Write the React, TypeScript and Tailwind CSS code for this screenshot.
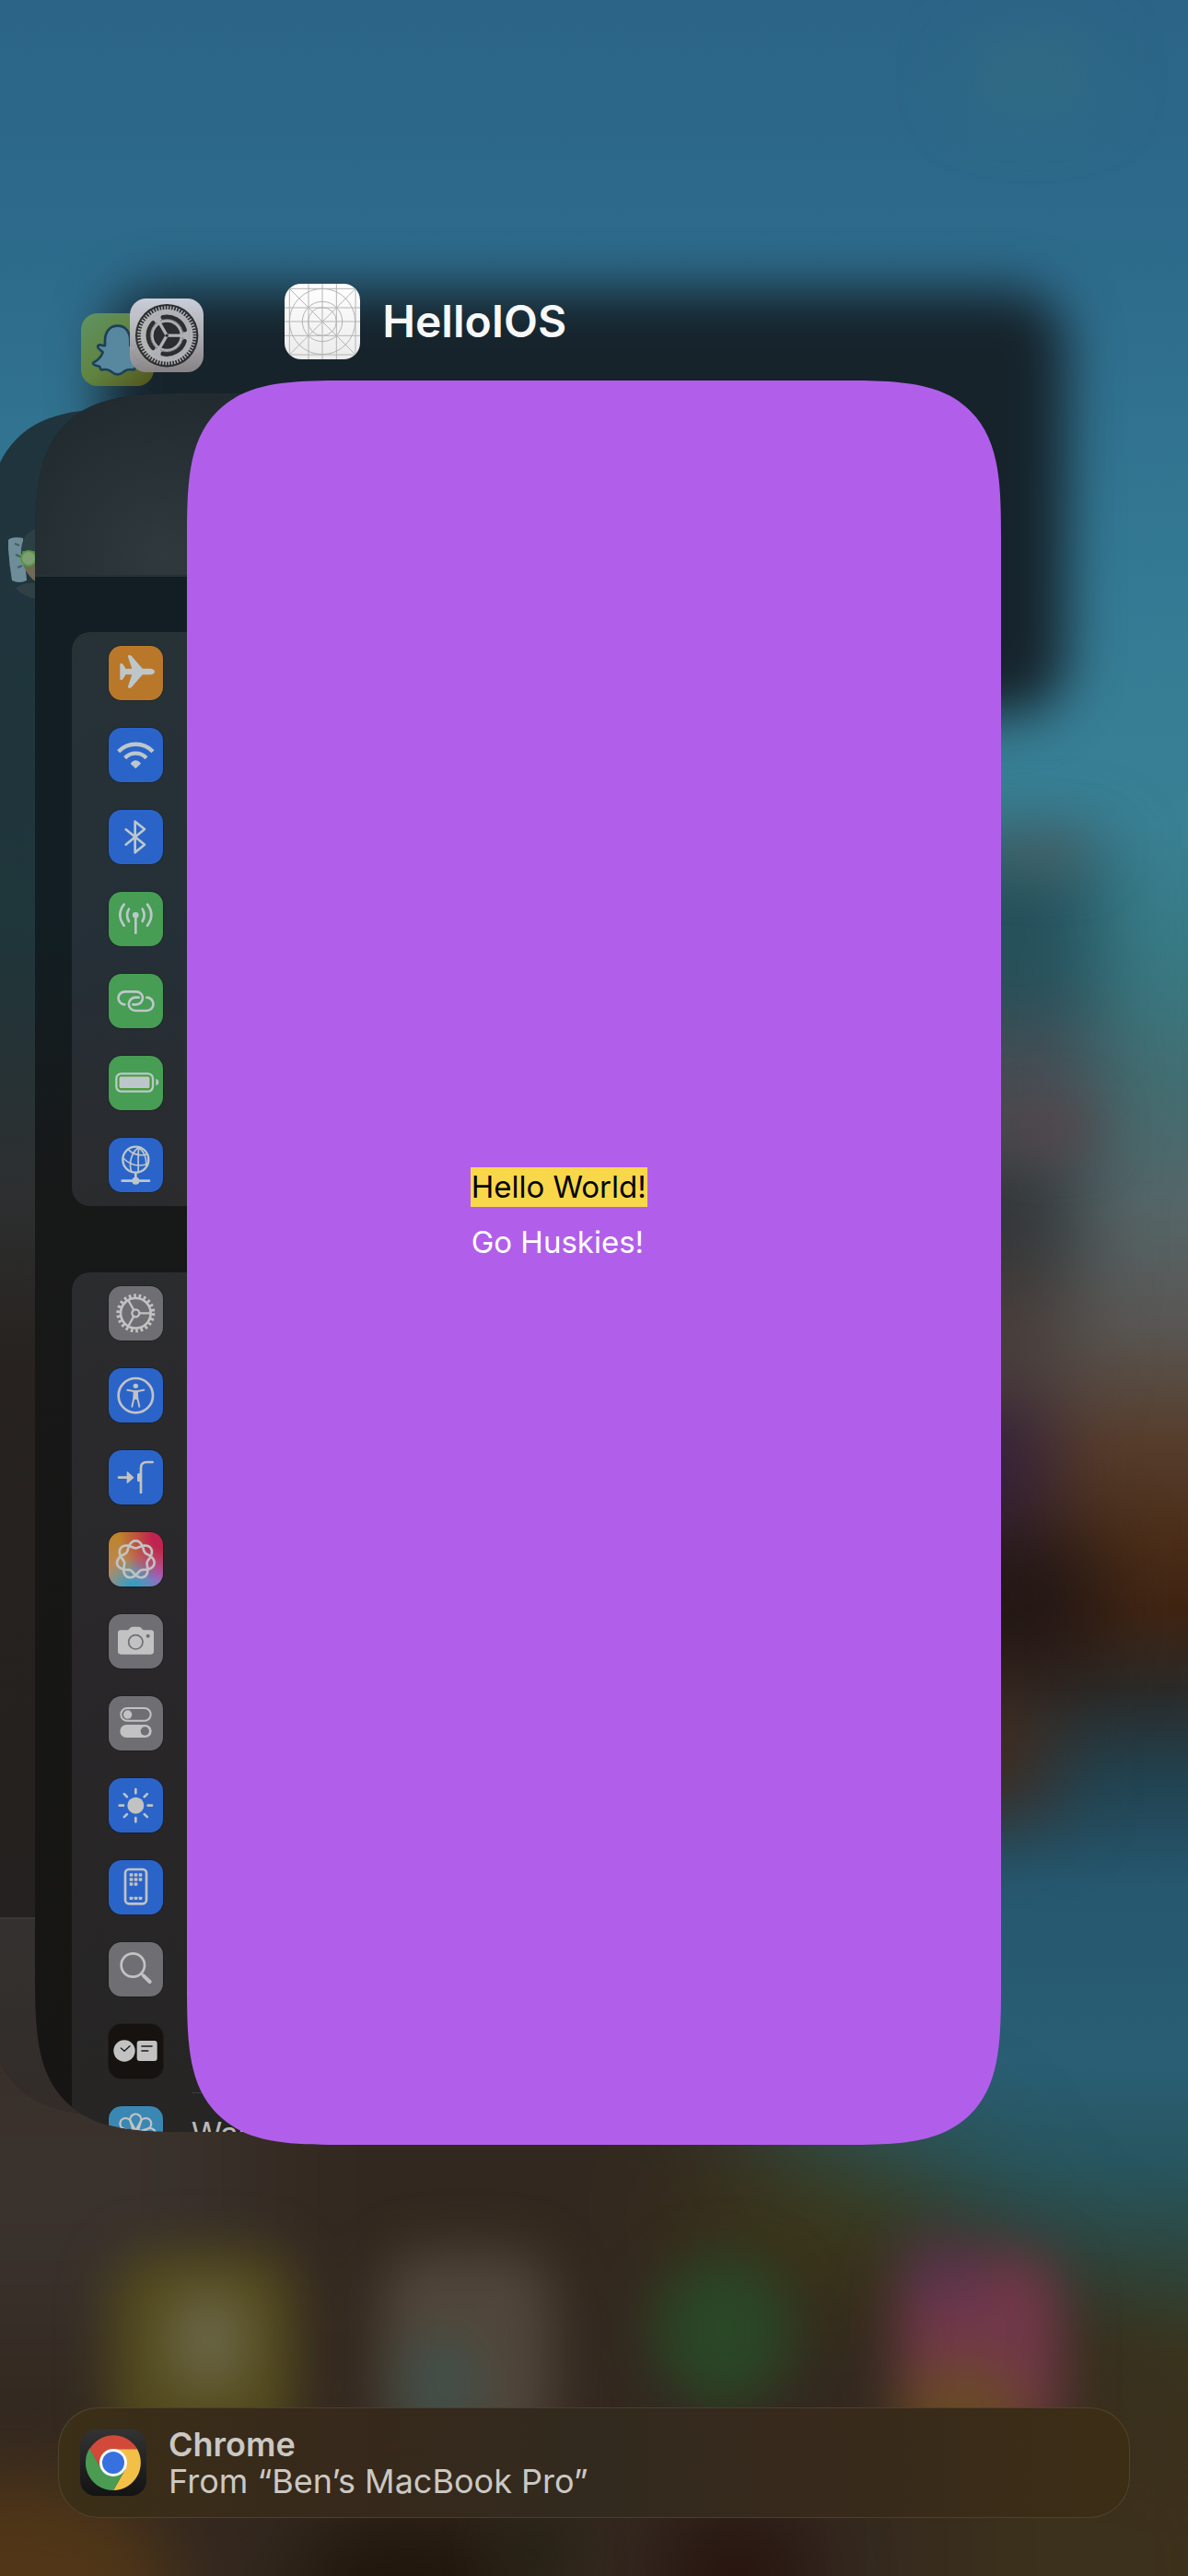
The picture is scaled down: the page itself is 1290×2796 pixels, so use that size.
import type { ReactNode } from "react";

const INK = "currentColor";

/* ---------- Wallpaper ---------- */

function Wallpaper() {
  return (
    <svg
      className="absolute inset-0 h-full w-full"
      viewBox="0 0 1290 2796"
      preserveAspectRatio="none"
      aria-hidden="true"
    >
      <defs>
        <linearGradient id="sky" x1="0" y1="0" x2="0" y2="1">
          <stop offset="0" stopColor="#2b6487" />
          <stop offset="0.09" stopColor="#2d6a8b" />
          <stop offset="0.23" stopColor="#347a94" />
          <stop offset="0.32" stopColor="#3a8094" />
          <stop offset="0.365" stopColor="#387b86" />
          <stop offset="0.42" stopColor="#426e72" />
          <stop offset="0.47" stopColor="#566567" />
          <stop offset="0.515" stopColor="#595653" />
          <stop offset="0.56" stopColor="#563d2c" />
          <stop offset="0.6" stopColor="#4a2d18" />
          <stop offset="0.625" stopColor="#402413" />
          <stop offset="0.655" stopColor="#2b2a28" />
          <stop offset="0.69" stopColor="#22424f" />
          <stop offset="0.733" stopColor="#265870" />
          <stop offset="0.8" stopColor="#295e74" />
          <stop offset="0.84" stopColor="#28565f" />
          <stop offset="0.88" stopColor="#2f463c" />
          <stop offset="0.915" stopColor="#3a381f" />
          <stop offset="1" stopColor="#3c2f1c" />
        </linearGradient>
        <filter id="near" filterUnits="userSpaceOnUse" x="-400" y="-400" width="2100" height="3600" colorInterpolationFilters="sRGB">
          <feGaussianBlur stdDeviation="28" />
        </filter>
        <filter id="mid" filterUnits="userSpaceOnUse" x="-400" y="-400" width="2100" height="3600" colorInterpolationFilters="sRGB">
          <feGaussianBlur stdDeviation="42" />
        </filter>
        <filter id="far" filterUnits="userSpaceOnUse" x="-400" y="-400" width="2100" height="3600" colorInterpolationFilters="sRGB">
          <feGaussianBlur stdDeviation="75" />
        </filter>
      </defs>
      <rect width="1290" height="2796" fill="url(#sky)" />

      <g filter="url(#far)">
        <path d="M-200 1500L500 1500L860 2340L980 2420L1350 2620L1490 3096L-200 3096Z" fill="#33281f" />
        <rect x="-150" y="2200" width="420" height="330" fill="#3a322d" />
        <ellipse cx="890" cy="2410" rx="150" ry="70" fill="#3f3a15" />
        <rect x="1010" y="2610" width="400" height="300" fill="#3c311c" />
      </g>

      <g filter="url(#mid)">
        <ellipse cx="1120" cy="80" rx="60" ry="24" fill="#37747a" />
        <rect x="900" y="920" width="290" height="190" fill="#26505a" />
        <rect x="900" y="1110" width="290" height="150" fill="#484c52" />
        <rect x="900" y="1260" width="270" height="120" fill="#323639" />
        <rect x="900" y="1380" width="260" height="120" fill="#473d39" />
        <rect x="900" y="1520" width="240" height="140" fill="#33203a" />
        <rect x="900" y="1670" width="290" height="140" fill="#221715" />
        <rect x="900" y="1830" width="240" height="140" fill="#402b1f" />
        <ellipse cx="20" cy="2820" rx="170" ry="130" fill="#523717" />
        <ellipse cx="440" cy="2810" rx="120" ry="80" fill="#21160b" />
        <ellipse cx="800" cy="2800" rx="80" ry="80" fill="#281410" />
      </g>

      <g filter="url(#near)">
        <ellipse cx="1130" cy="925" rx="60" ry="16" fill="#515d5e" />
        <ellipse cx="1140" cy="1225" rx="50" ry="24" fill="#574549" />
        <ellipse cx="580" cy="2770" rx="40" ry="30" fill="#222211" />
        <rect x="122" y="2444" width="198" height="220" rx="50" fill="#544c1d" />
        <ellipse cx="226" cy="2540" rx="44" ry="54" fill="#6b6648" />
        <rect x="414" y="2444" width="186" height="220" rx="50" fill="#51463a" />
        <ellipse cx="478" cy="2590" rx="44" ry="60" fill="#41504a" />
        <ellipse cx="786" cy="2530" rx="76" ry="82" fill="#2a4726" />
        <rect x="976" y="2444" width="176" height="210" rx="50" fill="#723849" />
        <ellipse cx="1024" cy="2466" rx="50" ry="36" fill="#5a344d" />
        <ellipse cx="1044" cy="2620" rx="70" ry="54" fill="#694a26" />
      </g>

      <rect x="114" y="314" width="1044" height="462" rx="60" fill="#16232b" filter="url(#near)" />
    </svg>
  );
}

/* ---------- App icons ---------- */

function SnapIcon() {
  return (
    <svg className="size-[79px]" viewBox="0 0 237 237" role="img" aria-label="Snapchat">
      <defs>
        <linearGradient id="snap" x1="0" y1="0" x2="1" y2="1">
          <stop offset="0" stopColor="#5e9464" />
          <stop offset="0.5" stopColor="#618340" />
          <stop offset="1" stopColor="#50521b" />
        </linearGradient>
      </defs>
      <rect width="237" height="237" rx="54" fill="url(#snap)" />
      <path
        d="M119 41C92 41 78 62 78 90V105C71 108 61 98 55 106C51 114 65 120 71 127C66 143 53 154 39 162C41 172 57 171 61 174C63 180 62 184 67 184C82 181 92 184 100 191C111 202 127 202 138 191C146 184 156 181 171 184C176 184 175 180 177 174C181 171 197 172 199 162C185 154 172 143 167 127C173 120 187 114 183 106C177 98 167 108 160 105V90C160 62 146 41 119 41Z"
        fill="#5888a0"
        stroke="#1b4156"
        strokeWidth="8"
        strokeLinejoin="round"
      />
    </svg>
  );
}

function SettingsAppIcon() {
  return (
    <svg className="size-20 opacity-95" viewBox="0 0 243 243" role="img" aria-label="Settings">
      <defs>
        <linearGradient id="steel" x1="0" y1="0" x2="0" y2="1">
          <stop offset="0" stopColor="#d3d6e0" />
          <stop offset="0.5" stopColor="#b5b4b9" />
          <stop offset="1" stopColor="#8d888b" />
        </linearGradient>
      </defs>
      <rect width="243" height="243" rx="54" fill="url(#steel)" />
      <circle cx="122" cy="122" r="104" fill="#2d2e31" />
      <circle cx="122" cy="122" r="91" fill="none" stroke="#b9b9be" strokeWidth="13" strokeDasharray="4.53 5" />
      <circle cx="122" cy="122" r="80" fill="none" stroke="#b9b9be" strokeWidth="13" />
      <circle cx="122" cy="122" r="55" fill="none" stroke="#b9b9be" strokeWidth="40" />
      <g fill="none" stroke="#2d2e31" strokeWidth="15" strokeLinecap="round">
        {[0, 120, 240].map((a) => (
          <path key={a} d="M180 141A61 61 0 0 1 109 182" transform={`rotate(${a} 122 122)`} />
        ))}
      </g>
      <circle cx="122" cy="122" r="53" fill="none" stroke="#77777b" strokeWidth="5" strokeDasharray="2.4 2.5" />
      <circle cx="122" cy="122" r="44" fill="#2d2e31" />
      <g stroke="#b9b9be" strokeWidth="10">
        {[0, 120, 240].map((a) => (
          <path key={a} d="M122 122H192" transform={`rotate(${a} 122 122)`} />
        ))}
      </g>
      <circle cx="122" cy="122" r="5" fill="#2d2e31" />
    </svg>
  );
}

function PlaceholderIcon() {
  const lines = [16, 78, 123, 169, 231];
  return (
    <svg className="size-[82px]" viewBox="0 0 246 246" role="img" aria-label="HelloIOS icon">
      <defs>
        <linearGradient id="paper" x1="0" y1="0" x2="0" y2="1">
          <stop offset="0" stopColor="#ffffff" />
          <stop offset="1" stopColor="#ececec" />
        </linearGradient>
        <clipPath id="tile">
          <rect width="246" height="246" rx="54" />
        </clipPath>
      </defs>
      <g clipPath="url(#tile)" fill="none" stroke="#b4b4b4" strokeWidth="3">
        <rect width="246" height="246" fill="url(#paper)" stroke="none" />
        {lines.map((p) => (
          <path key={p} d={`M${p} 0V246M0 ${p}H246`} />
        ))}
        <path d="M16 16L231 231M231 16L16 231" />
        <circle cx="123" cy="123" r="107" />
        <circle cx="123" cy="123" r="65" />
        <circle cx="123" cy="123" r="46" />
      </g>
    </svg>
  );
}

function ChromeIcon() {
  return (
    <svg className="size-[72px] shrink-0" viewBox="0 0 216 216" role="img" aria-label="Chrome icon">
      <defs>
        <linearGradient id="night" x1="0" y1="0" x2="0" y2="1">
          <stop offset="0" stopColor="#333333" />
          <stop offset="1" stopColor="#131313" />
        </linearGradient>
      </defs>
      <rect width="216" height="216" rx="50" fill="url(#night)" />
      <path d="M108 64H186A90 90 0 0 1 108 198L147 130Z" fill="#f3c047" />
      <path d="M31 61L70 130L108 152L147 130L108 198A90 90 0 0 1 31 61Z" fill="#4b9b53" />
      <path d="M31 63A90 90 0 0 1 186 63H108L70 130Z" fill="#d2493a" />
      <circle cx="108" cy="108" r="45" fill="#fafafa" />
      <circle cx="108" cy="108" r="36" fill="#3771e0" />
    </svg>
  );
}

/* ---------- Settings rows ---------- */

function knotPath() {
  const steps = 168;
  const points: string[] = [];
  for (let i = 0; i < steps; i++) {
    const t = (i / steps) * Math.PI * 4;
    const r = 50 + 12 * Math.cos(3.5 * t);
    points.push(`${(88 + r * Math.sin(t)).toFixed(1)} ${(90 - r * Math.cos(t)).toFixed(1)}`);
  }
  return `M${points.join("L")}Z`;
}

const line = { fill: "none", stroke: INK, strokeLinecap: "round", strokeLinejoin: "round" } as const;

type Row = { label: string; tile: string; art: ReactNode };

const BLUE = "bg-[#2a64c9]";
const GREEN = "bg-[#469d53]";
const GREY = "bg-[#6f6e73]";

const connectivity: Row[] = [
  {
    label: "Airplane Mode",
    tile: "bg-[#b97829]",
    art: (
      <path
        fill={INK}
        d="M150 84C150 90 142 94 134 94H110L75 134Q73 137 69 137H65Q62 137 63 133L76 94L56 93L46 109Q44 111 41 111Q37 111 37 107V61Q37 57 41 57Q44 57 46 59L56 75L76 74L63 35Q62 31 65 31H69Q73 31 75 34L110 74H134C142 74 150 78 150 84Z"
      />
    ),
  },
  {
    label: "Wi-Fi",
    tile: BLUE,
    art: (
      <>
        <path {...line} strokeLinecap="butt" strokeWidth="13" d="M32 77A78 78 0 0 1 144 77M53 98A48 48 0 0 1 123 98" />
        <path fill={INK} stroke={INK} strokeWidth="3" strokeLinejoin="round" d="M88 131L72 116Q88 98 104 116Z" />
      </>
    ),
  },
  {
    label: "Bluetooth",
    tile: BLUE,
    art: <path {...line} strokeWidth="8" d="M56 64L117 113L86 139V38L117 63L56 113" />,
  },
  {
    label: "Cellular",
    tile: GREEN,
    art: (
      <>
        <circle cx="88" cy="76" r="10" fill={INK} />
        <path {...line} strokeWidth="8" d="M88 80V134M66 56Q54 76 66 96M110 56Q122 76 110 96M50 41Q24 75 50 110M126 41Q152 75 126 110" />
      </>
    ),
  },
  {
    label: "Personal Hotspot",
    tile: GREEN,
    art: (
      <path
        {...line}
        strokeWidth="8"
        d="M52 100A21 21 0 0 1 53 58H90A21 21 0 0 1 90 100H79M98 77H87A21 21 0 0 0 87 120H124A21 21 0 0 0 124 77"
      />
    ),
  },
  {
    label: "Battery",
    tile: GREEN,
    art: (
      <>
        <rect x="25" y="58" width="119" height="58" rx="16" {...line} strokeWidth="7" />
        <rect x="33" y="66" width="102" height="41" rx="7" fill={INK} stroke="#3f9b1f" strokeWidth="3" />
        <path d="M154 75Q163 78 163 86Q163 94 154 97Z" fill={INK} />
      </>
    ),
  },
  {
    label: "VPN",
    tile: BLUE,
    art: (
      <>
        <circle cx="88" cy="71" r="42" {...line} strokeWidth="7" />
        <path {...line} strokeWidth="5" d="M100 30C76 44 64 80 74 110M98 32C94 60 98 90 96 112M98 32Q126 54 122 94M66 40Q88 62 126 54M47 66Q84 102 128 84" />
        <path {...line} strokeWidth="8" d="M88 114V138M44 140H132" />
        <circle cx="88" cy="140" r="12" fill={INK} />
      </>
    ),
  },
];

const general: Row[] = [
  {
    label: "General",
    tile: GREY,
    art: (
      <>
        <circle cx="88" cy="88" r="49" {...line} strokeWidth="8" />
        <circle cx="88" cy="88" r="57" {...line} strokeLinecap="butt" strokeWidth="12" strokeDasharray="8 8.28" />
        <circle cx="88" cy="88" r="12" {...line} strokeWidth="7" />
        <path {...line} strokeWidth="7" d="M100 88H137M82 78L64 46M82 98L64 130" />
      </>
    ),
  },
  {
    label: "Accessibility",
    tile: BLUE,
    art: (
      <>
        <circle cx="88" cy="89" r="56" {...line} strokeWidth="8" />
        <circle cx="88" cy="58" r="8" fill={INK} />
        <path {...line} strokeWidth="6" d="M61 71L82 75H94L115 71M84 78L82 98L76 125M92 78L94 98L100 125" />
        <path fill={INK} d="M80 74H96V102H80Z" />
      </>
    ),
  },
  {
    label: "Action Button",
    tile: BLUE,
    art: (
      <>
        <path {...line} strokeWidth="8" d="M33 89H60M105 138V58Q105 39 124 39H143" />
        <path fill={INK} stroke={INK} strokeWidth="4" strokeLinejoin="round" d="M61 72L80 89L61 106Z" />
        <rect x="93" y="75" width="12" height="28" rx="5" fill={INK} />
      </>
    ),
  },
  {
    label: "Apple Intelligence & Siri",
    tile: "bg-[radial-gradient(circle_at_100%_10%,#c02351_15%,transparent_60%),radial-gradient(circle_at_45%_105%,#2d9fc6_5%,transparent_50%),radial-gradient(circle_at_100%_90%,#a765be_15%,transparent_55%),linear-gradient(180deg,#bd8426,#b98a72)]",
    art: <path {...line} strokeWidth="8" d={knotPath()} />,
  },
  {
    label: "Camera",
    tile: GREY,
    art: (
      <>
        <path
          fill={INK}
          d="M40 52H62Q67 51 69 46Q72 41 78 41H98Q104 41 107 46Q109 51 114 52H137Q147 52 147 62V121Q147 131 137 131H40Q30 131 30 121V62Q30 52 40 52Z"
        />
        <circle cx="88" cy="91" r="23" fill="none" stroke="#6f6e73" strokeWidth="5" />
        <circle cx="128" cy="71" r="6" fill="#6f6e73" />
      </>
    ),
  },
  {
    label: "Control Center",
    tile: GREY,
    art: (
      <>
        <rect x="40" y="39" width="97" height="41" rx="20" {...line} strokeWidth="6" />
        <circle cx="62" cy="60" r="14" fill={INK} />
        <rect x="37" y="93" width="103" height="42" rx="21" fill={INK} />
        <circle cx="118" cy="114" r="14" fill="#6f6e73" />
      </>
    ),
  },
  {
    label: "Display & Brightness",
    tile: BLUE,
    art: (
      <>
        <circle cx="88" cy="89" r="27" fill={INK} />
        {[0, 45, 90, 135, 180, 225, 270, 315].map((a) => (
          <path key={a} {...line} strokeWidth="8" d="M88 49V36" transform={`rotate(${a} 88 89)`} />
        ))}
      </>
    ),
  },
  {
    label: "Home Screen & App Library",
    tile: BLUE,
    art: (
      <>
        <rect x="54" y="30" width="69" height="112" rx="12" {...line} strokeWidth="8" />
        {[
          [68, 43], [83, 43], [98, 43],
          [68, 58], [83, 58], [98, 58],
          [68, 73], [83, 73],
          [68, 119], [83, 119], [98, 119],
        ].map(([x, y]) => (
          <rect key={`${x}-${y}`} x={x} y={y} width="11" height="10" rx="2" fill={INK} />
        ))}
      </>
    ),
  },
  {
    label: "Search",
    tile: GREY,
    art: (
      <>
        <circle cx="79" cy="75" r="38" {...line} strokeWidth="8" />
        <path {...line} strokeWidth="8" d="M106 102L114 110" />
        <path {...line} strokeWidth="12" d="M114 110L134 129" />
      </>
    ),
  },
  {
    label: "StandBy",
    tile: "bg-[#151210]",
    art: (
      <>
        <circle cx="51" cy="87" r="35" fill={INK} />
        <path {...line} stroke="#1b1a18" strokeWidth="4" d="M40 78L51 88L69 71" />
        <rect x="92" y="54" width="66" height="66" rx="9" fill={INK} />
        <path {...line} stroke="#1b1a18" strokeWidth="5" d="M108 72H141M108 87H128" />
      </>
    ),
  },
  {
    label: "Wallpaper",
    tile: "bg-[#3a87b3]",
    art: (
      <>
        {[0, 45, 90, 135, 180, 225, 270, 315].map((a) => (
          <path
            key={a}
            {...line}
            strokeWidth="7"
            d="M88 80L74 55A18 18 0 1 1 102 55Z"
            transform={`rotate(${a} 88 90)`}
          />
        ))}
      </>
    ),
  },
];

function SettingsGroup({ rows, surface }: { rows: Row[]; surface: string }) {
  return (
    <ul className={`rounded-l-[20px] ${surface}`}>
      {rows.map((row) => (
        <li key={row.label} className="flex h-[89px] items-stretch pl-10">
          <span
            role="img"
            aria-label={row.label}
            className={`my-[15px] size-[59px] shrink-0 overflow-hidden rounded-[14px] ring-1 ring-black/20 ${row.tile}`}
          >
            <svg viewBox="0 0 177 177" className="size-full" aria-hidden="true">
              {row.art}
            </svg>
          </span>
          {row.label === "Wallpaper" && (
            <span className="ml-[31px] flex flex-1 items-center border-t border-white/10 text-[34px] leading-[44px] text-[#b9b8b7]">
              {row.label}
            </span>
          )}
        </li>
      ))}
    </ul>
  );
}

/* ---------- Cards ---------- */

const cardShape =
  "overflow-hidden rounded-[120px] supports-[corner-shape:squircle]:rounded-[173px] [corner-shape:superellipse(1.7)]";

function SnapCard() {
  return (
    <figure className="col-start-1 row-start-1 mt-8 -ml-[1.2%] w-[66.3%]">
      <figcaption className="mb-6 ml-[103px] h-[79px]">
        <SnapIcon />
      </figcaption>
      <div
        className={`flex aspect-[1290/2796] flex-col justify-between bg-[linear-gradient(180deg,#20343d_0%,#1f363b_30%,#2d2f30_46%,#27221f_56%,#22211f_100%)] ${cardShape}`}
      >
        <svg className="mt-[129px] ml-[22px] h-[78px] w-[72px]" viewBox="0 0 72 78" aria-hidden="true">
          <path d="M2 14Q6 10 18 12L22 58Q14 62 6 58Q3 40 2 24Z" fill="#6f8d98" />
          <path d="M9 18L14 20M10 30L17 33M12 44L17 42" stroke="#3f5f6c" strokeWidth="2" />
          <path d="M16 30C15 12 24 0 44 0C62 0 66 20 62 36L20 40Z" fill="#2b3f45" />
          <path d="M17 26H60V50Q50 66 38 62Q24 58 17 38Z" fill="#6f6a55" />
          <circle cx="24" cy="34" r="8" fill="#7f9f72" stroke="#4f9a3c" strokeWidth="2" />
          <path d="M10 66Q22 58 34 62L70 62V78H34Q18 76 10 66Z" fill="#2f4145" />
        </svg>
        <div className="h-[216px] border-t-2 border-white/5 bg-[linear-gradient(180deg,#33312f,#332c29)]" />
      </div>
    </figure>
  );
}

function SettingsCard() {
  return (
    <figure className="col-start-1 row-start-1 mt-4 ml-[2.92%] w-[67.5%]">
      <figcaption className="mb-[23px] ml-[103px] h-20">
        <SettingsAppIcon />
      </figcaption>
      <div
        className={`flex aspect-[1290/2796] flex-col bg-[linear-gradient(180deg,#121e23_0%,#121e23_30%,#171818_46%,#161513_100%)] ${cardShape}`}
      >
        <div className="h-[199px] shrink-0 border-b-2 border-[#263134] bg-[radial-gradient(circle_at_16%_90%,#2f393e,#212b2f_25%)]" />
        <div className="mt-[60px] ml-10 flex flex-col gap-[72px]">
          <div className="text-[#bdc7cb]">
            <SettingsGroup
              rows={connectivity}
              surface="bg-[linear-gradient(180deg,#273237_0%,#252f37_55%,#2b2b2d_100%)]"
            />
          </div>
          <div className="text-[#c2c2c2]">
            <SettingsGroup rows={general} surface="bg-[linear-gradient(180deg,#2b2c2e,#292729_40%,#262524)]" />
          </div>
        </div>
      </div>
    </figure>
  );
}

function HelloCard() {
  return (
    <figure className="col-start-1 row-start-1 ml-[15.75%] w-[68.5%]">
      <figcaption className="mb-[23px] ml-[106px] flex h-[82px] items-center gap-6 text-[48px] leading-[60px] font-semibold text-[#f8f8f9]">
        <PlaceholderIcon />
        HelloIOS
      </figcaption>
      <div
        className={`flex aspect-[1290/2796] flex-col items-start gap-[17px] bg-[#b15fea] pt-[96.6%] pl-[34.8%] text-[33px] leading-[43px] ${cardShape}`}
      >
        <p className="bg-[#f9d74a] px-px text-black">Hello World!</p>
        <p className="px-px text-white">Go Huskies!</p>
      </div>
    </figure>
  );
}

function HandoffBanner() {
  return (
    <a
      href="#chrome"
      className="mx-[63px] flex h-[120px] items-center gap-6 rounded-[44px] border border-white/10 bg-[linear-gradient(90deg,#3b2f17,#37291b_25%,#322a1e_50%,#37291c_70%,#3c2e15)] px-[23px] text-[36px] leading-[40px] text-[#cbc8c3]"
    >
      <ChromeIcon />
      <span className="flex flex-col">
        <span className="font-semibold">Chrome</span>
        <span>From “Ben’s MacBook Pro”</span>
      </span>
    </a>
  );
}

export default function App() {
  return (
    <div className="relative isolate flex min-h-screen flex-col justify-between overflow-hidden bg-[#2c2a22] pt-[308px] pb-[63px] font-['Inter',sans-serif]">
      <Wallpaper />
      <main className="relative grid grid-cols-1 items-start">
        <SnapCard />
        <SettingsCard />
        <HelloCard />
      </main>
      <footer className="relative mt-12">
        <HandoffBanner />
      </footer>
    </div>
  );
}
